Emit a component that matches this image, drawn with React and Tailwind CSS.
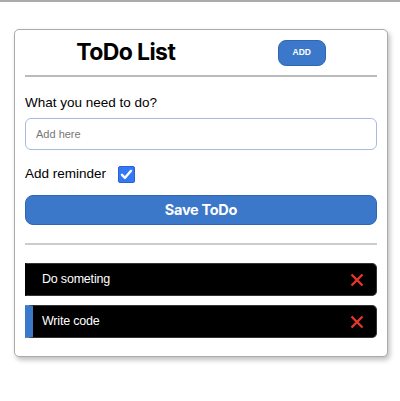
import React from "react";

function XIcon() {
  return (
    <svg width="14" height="14" viewBox="0 0 14 14" className="shrink-0">
      <path d="M1.5 1.5 L12.5 12.5 M12.5 1.5 L1.5 12.5" stroke="#e8352b" strokeWidth="2.4" strokeLinecap="butt" />
    </svg>
  );
}

function Item({ text, reminder }) {
  return (
    <div
      className={`flex items-center justify-between h-[33px] bg-black rounded-r-[5px] border border-[#333] border-l-[8px] ${
        reminder ? "border-l-[#3b78c9]" : "border-l-black"
      } pl-[9px] pr-[12px]`}
    >
      <span className="text-white text-[12.5px] tracking-[-0.2px]" style={{ fontFamily: "'Liberation Sans', Arial, sans-serif" }}>
        {text}
      </span>
      <XIcon />
    </div>
  );
}

export default function App() {
  return (
    <div
      className="min-h-[401px] w-[400px] bg-white border-t-2 border-[#aaaaaa]"
      style={{ fontFamily: "'Liberation Sans', Arial, sans-serif" }}
    >
      <div className="ml-[14px] mt-[27px] w-[374px] border border-[#aaaaaa] rounded-[5px] bg-white shadow-[2px_3px_5px_rgba(0,0,0,0.25)] px-[10px] pb-[18px]">
        <div className="flex items-center justify-around h-[45px]">
          <h1
            className="text-[23px] font-bold text-black tracking-[-0.6px] leading-none"
            style={{ fontFamily: "Inter, 'Liberation Sans', Arial, sans-serif" }}
          >
            ToDo List
          </h1>
          <button className="w-[48px] h-[26px] rounded-[8px] bg-[#3b78c9] text-white text-[8.5px] font-bold border border-[#2f67b3]">
            ADD
          </button>
        </div>
        <div className="h-[2px] bg-[#bbbbbb]" />
        <div className="mt-[18px] h-[16px] text-[13.5px] leading-[16px] text-black">What you need to do?</div>
        <input
          className="mt-[7px] block w-full h-[32px] rounded-[6px] border border-[#a8badf] px-[10px] text-[11px] placeholder:text-[#777] outline-none"
          placeholder="Add here"
        />
        <div className="flex items-center mt-[15px] h-[18px]">
          <span className="text-[13.5px] text-black">Add reminder</span>
          <span className="ml-[12px] w-[17px] h-[17px] bg-[#3478f6] rounded-[2px] flex items-center justify-center border border-[#2a63d0]">
            <svg width="13" height="13" viewBox="0 0 13 13">
              <path d="M2 6.8 L5 9.8 L11 2.8" stroke="white" strokeWidth="2.4" fill="none" strokeLinecap="round" strokeLinejoin="round" />
            </svg>
          </span>
        </div>
        <button
          className="mt-[12px] block w-full h-[30px] rounded-[8px] bg-[#3b78c9] border border-[#2f67b3] text-white text-[14.5px] tracking-[-0.3px] font-bold"
          style={{ fontFamily: "Inter, 'Liberation Sans', Arial, sans-serif" }}
        >
          Save ToDo
        </button>
        <div className="mt-[18px] h-[2px] bg-[#cccccc]" />
        <div className="mt-[18px] flex flex-col gap-[9px]">
          <Item text="Do someting" />
          <Item text="Write code" reminder />
        </div>
      </div>
    </div>
  );
}
